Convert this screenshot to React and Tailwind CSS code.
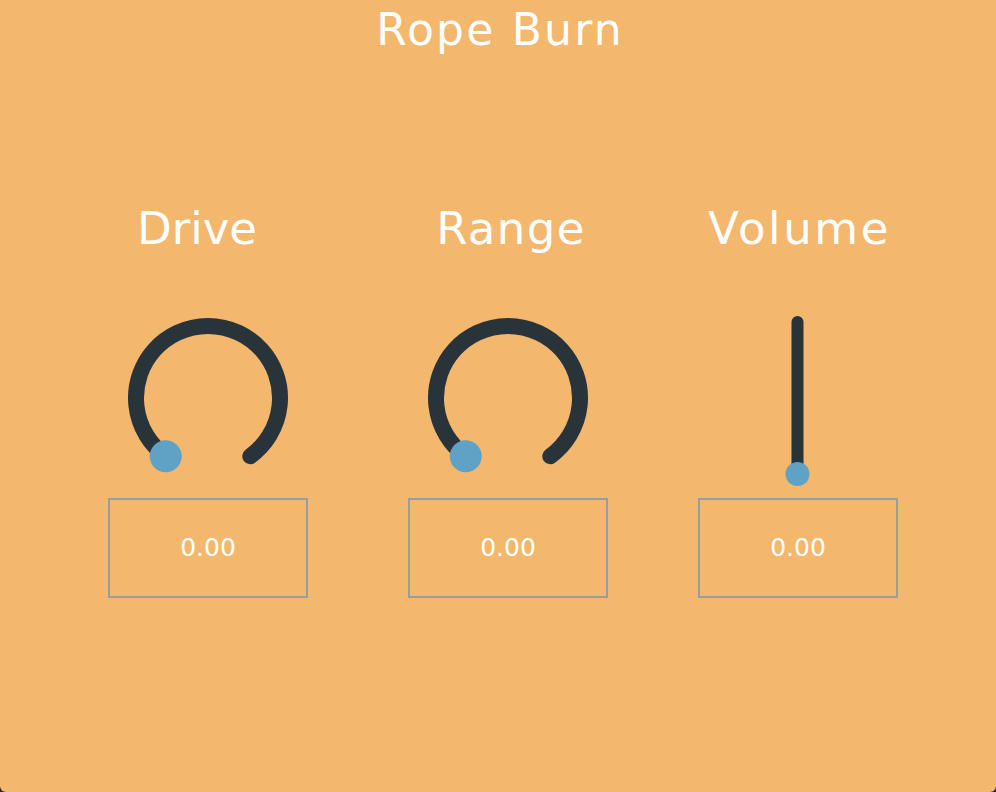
import React from "react";

const FONT = { fontFamily: '"DejaVu Sans", "Liberation Sans", sans-serif' };

function Knob() {
  return (
    <svg width="200" height="246" viewBox="0 0 200 246" className="block">
      <path
        d="M 57.7 204.2 A 72 72 0 1 1 142.3 204.2"
        fill="none"
        stroke="#29333a"
        strokeWidth="16"
        strokeLinecap="round"
      />
      <circle cx="57.7" cy="204.2" r="16" fill="#5fa2c6" />
    </svg>
  );
}

function Fader() {
  return (
    <svg width="200" height="246" viewBox="0 0 200 246" className="block">
      <line x1="99.5" y1="70" x2="99.5" y2="222" stroke="#29333a" strokeWidth="12" strokeLinecap="round" />
      <circle cx="99.5" cy="222" r="12" fill="#5fa2c6" />
    </svg>
  );
}

function Column({ label, labelClass, className, children }) {
  return (
    <div className={`flex w-[200px] flex-col items-center ${className}`}>
      <div className={`flex h-[45px] w-full justify-center text-[45px] leading-[43px] text-white whitespace-nowrap ${labelClass}`}>
        {label}
      </div>
      {children}
      <div className="flex h-[100px] w-[200px] items-center justify-center border-2 border-[#979da1] text-[25px] text-white">
        0.00
      </div>
    </div>
  );
}

export default function App() {
  return (
    <div className="h-[792px] w-[996px] overflow-hidden bg-[#2b2b2b]" style={FONT}>
      <div className="h-full w-full rounded-b-[6px] bg-[#f3b76d]">
        <div className="flex h-[64px] justify-center pt-[4px] pl-[4px] text-[44px] leading-[52px] tracking-[2.2px] text-white">
          Rope Burn
        </div>
        <div className="flex pt-[143px] pl-[108px]">
          <Column label="Drive" labelClass="pr-[22px]" className="">
            <Knob />
          </Column>
          <Column label="Range" labelClass="pl-[6px] tracking-[1.4px]" className="ml-[100px]">
            <Knob />
          </Column>
          <Column label="Volume" labelClass="pl-[3px] tracking-[2.6px]" className="ml-[90px]">
            <Fader />
          </Column>
        </div>
      </div>
    </div>
  );
}
